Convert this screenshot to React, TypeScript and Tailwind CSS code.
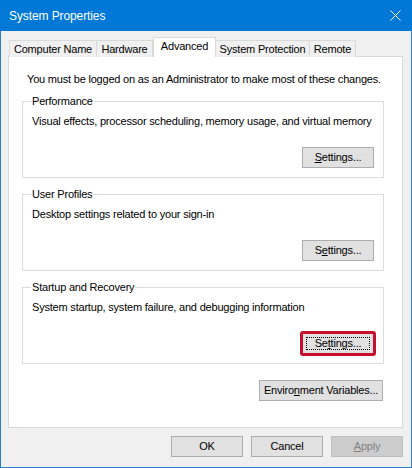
import React from 'react';

const font = { fontFamily: '"Liberation Sans", Arial, sans-serif' };

const Btn: React.FC<{ children: React.ReactNode; className?: string; disabled?: boolean }> = ({ children, className = '', disabled }) => (
  <div
    className={`flex items-center justify-center h-[21px] border leading-none ${
      disabled ? 'bg-[#cccccc] border-[#bfbfbf] text-[#838383]' : 'bg-[#e1e1e1] border-[#adadad] text-black'
    } ${className}`}
  >
    {children}
  </div>
);

const Group: React.FC<{ title: string; text: string; children: React.ReactNode }> = ({ title, text, children }) => (
  <div className="relative h-[77px] w-[362px] border border-[#dcdcdc] flex flex-col">
    <span className="absolute -top-[8px] left-[8px] bg-white px-[1px] leading-[15px]">{title}</span>
    <p className="pl-[9px] pt-[12px] leading-[15px]">{text}</p>
    <div className="mt-auto mb-[9px] mr-[9px] self-end">{children}</div>
  </div>
);

const tabs = [
  { label: 'Computer Name', w: 'w-[88px]' },
  { label: 'Hardware', w: 'w-[57px]' },
  { label: 'Advanced', w: 'w-[63px]', active: true },
  { label: 'System Protection', w: 'w-[95px]' },
  { label: 'Remote', w: 'w-[47px]' },
];

export default function App() {
  return (
    <div
      className="w-[412px] h-[468px] flex flex-col bg-[#f0f0f0] text-black text-[11px] tracking-[-0.2px] whitespace-nowrap"
      style={font}
    >
      {/* title bar */}
      <div className="h-[31px] bg-[#0078d7] flex items-center pl-[9px] pr-[10px] text-white text-[12px] tracking-[-0.1px]">
        <span className="flex-1">System Properties</span>
        <svg width="11" height="11" viewBox="0 0 11 11" className="mr-[1px]">
          <path d="M0.5 0.5 L10.5 10.5 M10.5 0.5 L0.5 10.5" stroke="white" strokeWidth="1" />
        </svg>
      </div>

      <div className="flex-1 flex flex-col border-x border-b border-[#2a7fcf] pl-[7px] pr-[7px] pt-[7px]">
        {/* tabs */}
        <div className="flex items-end h-[19px] pl-[1px] relative z-10 -mb-px">
          {tabs.map((t) =>
            t.active ? (
              <div
                key={t.label}
                className={`${t.w} h-[20px] bg-white border border-b-0 border-[#d9d9d9] flex items-center justify-center pb-[2px]`}
              >
                {t.label}
              </div>
            ) : (
              <div
                key={t.label}
                className={`${t.w} h-[17px] bg-[#f0f0f0] border border-b-0 border-[#d9d9d9] -ml-px first:ml-0 flex items-center justify-center`}
              >
                {t.label}
              </div>
            )
          )}
        </div>

        {/* panel */}
        <div className="w-[395px] h-[372px] bg-white border border-[#d9d9d9] flex flex-col pl-[13px]">
          <p className="pl-[5px] pt-[15px] leading-[15px]">
            You must be logged on as an Administrator to make most of these changes.
          </p>
          <div className="flex flex-col gap-[16px] mt-[14px]">
            <Group title="Performance" text="Visual effects, processor scheduling, memory usage, and virtual memory">
              <Btn className="w-[72px]">
                <span><u>S</u>ettings...</span>
              </Btn>
            </Group>
            <Group title="User Profiles" text="Desktop settings related to your sign-in">
              <Btn className="w-[72px]">
                <span>S<u>e</u>ttings...</span>
              </Btn>
            </Group>
            <Group title="Startup and Recovery" text="System startup, system failure, and debugging information">
              <div className="relative">
                <Btn className="w-[72px] relative">
                  <span>Se<u>t</u>tings...</span>
                  <span className="absolute inset-[3px] border border-dotted border-black" />
                </Btn>
                <span className="absolute -inset-[2px] border-[3px] border-[#c8102e] rounded-[3px]" />
              </div>
            </Group>
          </div>
          <div className="flex justify-end w-[361px] mt-[16px]">
            <Btn className="w-[124px]">
              <span>Enviro<u>n</u>ment Variables...</span>
            </Btn>
          </div>
        </div>

        {/* bottom buttons */}
        <div className="flex justify-end gap-[8px] pr-px mt-[8px]">
          <Btn className="w-[72px]">OK</Btn>
          <Btn className="w-[72px]">Cancel</Btn>
          <Btn className="w-[72px]" disabled>
            <span><u>A</u>pply</span>
          </Btn>
        </div>
      </div>
    </div>
  );
}
